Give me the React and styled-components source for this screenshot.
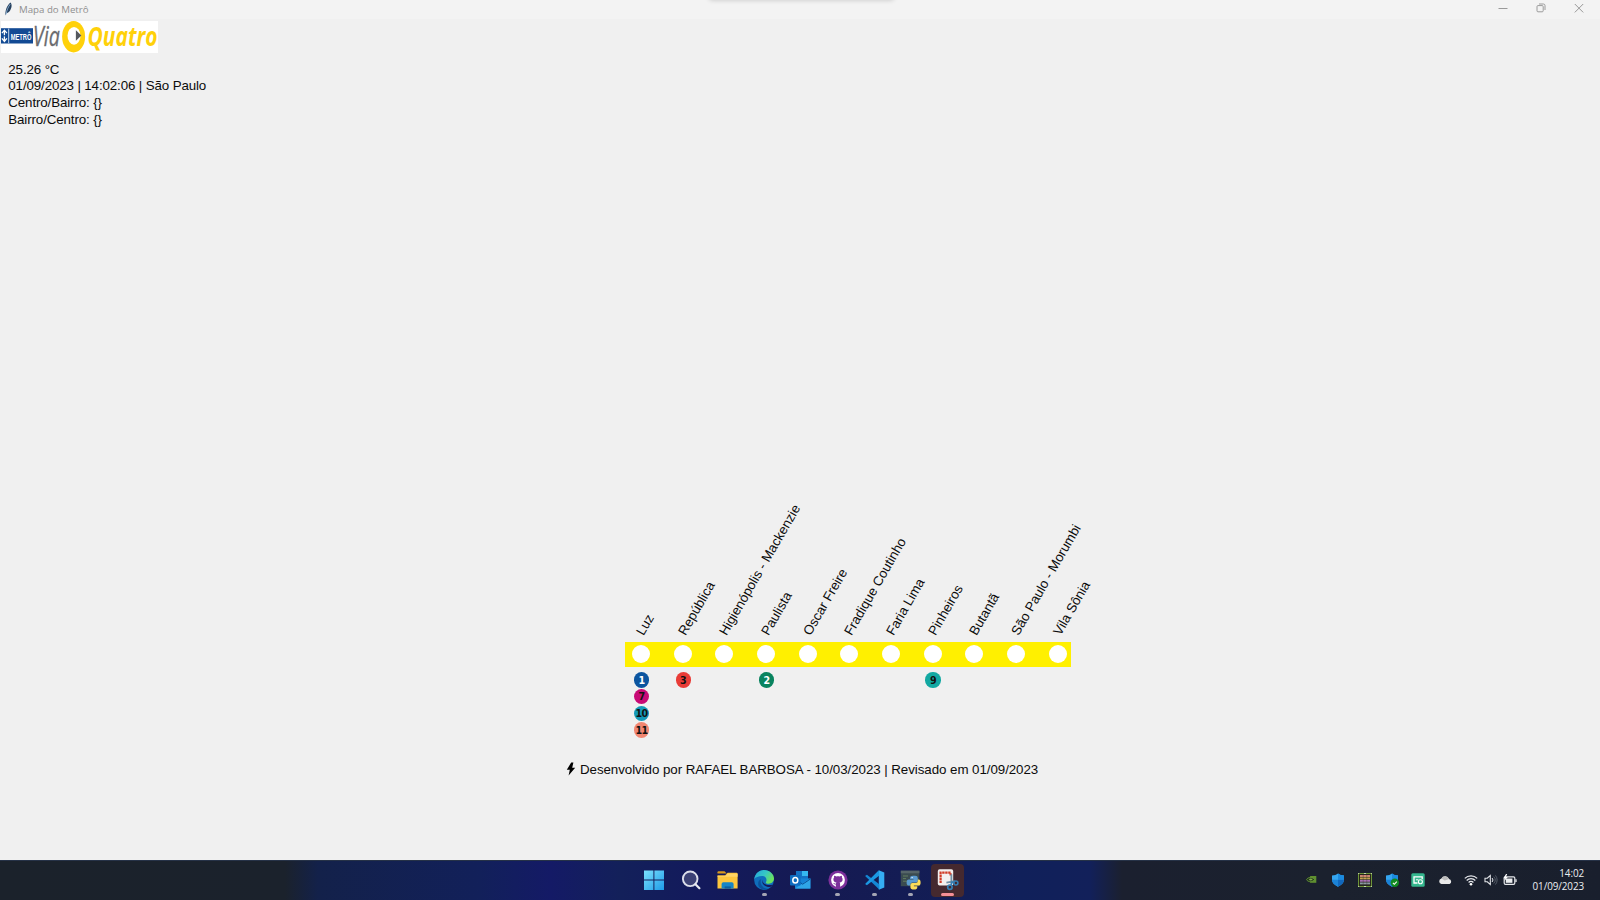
import React from "react";
import styled, { createGlobalStyle } from "styled-components";

const Global = createGlobalStyle`
  * { box-sizing: border-box; }
  body { margin: 0; background: #f0f0f0; overflow: hidden; }
  svg { display: block; flex: none; }
`;

const Screen = styled.div`
  width: 1600px;
  height: 900px;
  display: flex;
  flex-direction: column;
  background: #f0f0f0;
  color: #0c0c0c;
  font-family: "Liberation Sans", Arial, sans-serif;
  font-size: 13.33px;
`;

const TitleBar = styled.header`
  position: relative;
  height: 19px;
  flex: none;
  display: flex;
  align-items: center;
  padding: 0 15px 2px 3px;
  background: #f3f3f3;
`;

const TopShade = styled.div`
  position: absolute;
  left: 709px;
  top: -7px;
  width: 185px;
  height: 6px;
  border-radius: 4px;
  box-shadow: 0 1px 5px rgba(0, 0, 0, 0.2);
`;

const WindowTitle = styled.span`
  flex: 1;
  margin-left: 5px;
  padding-top: 3px;
  font-family: "Open Sans", sans-serif;
  font-size: 9.7px;
  line-height: 14px;
  color: #8f8f8f;
`;

const WindowControls = styled.div`
  display: flex;
  gap: 26px;
  margin-top: -1px;
`;

const Client = styled.main`
  flex: 1;
  display: flex;
  flex-direction: column;
`;

const LogoStrip = styled.div`
  margin: 2px 0 0 1px;
  width: 157px;
  height: 31.5px;
  background: #fff;
`;

const Info = styled.div`
  height: 589.2px;
  padding: 9.2px 0 0 8.3px;
  line-height: 16.67px;
  letter-spacing: -0.12px;
`;

const Line = styled.section`
  margin-left: 625px;
  width: 446px;
  height: 127px;
`;

const Track = styled.div`
  display: flex;
  height: 25px;
  padding-left: 7px;
  background: #fff000;
`;

const Station = styled.div`
  flex: none;
  width: 41.67px;
  display: flex;
  flex-direction: column;
`;

const StationName = styled.div`
  height: 0;
  white-space: nowrap;

  span {
    display: block;
    width: max-content;
    line-height: 16px;
    transform-origin: 0 12.5px;
    transform: translate(12px, -18px) rotate(-60deg);
  }
`;

const Stop = styled.div`
  width: 18px;
  height: 18px;
  flex: none;
  margin-top: 3px;
  border-radius: 50%;
  background: #fff;
`;

const Transfers = styled.div`
  display: flex;
  flex-direction: column;
  gap: 1.27px;
  margin: 9.7px 0 0 1.9px;
`;

const Transfer = styled.span`
  width: 15.4px;
  height: 15.4px;
  flex: none;
  display: flex;
  align-items: center;
  justify-content: center;
  border-radius: 50%;
  background: ${(p) => p.$bg};
  color: ${(p) => p.$fg || "#111"};
  font: bold 10.6px/15px "DejaVu Sans Condensed", "DejaVu Sans", sans-serif;
  font-stretch: condensed;
  letter-spacing: -0.7px;
  padding-right: 0.4px;
`;

const Credits = styled.footer`
  display: flex;
  align-items: center;
  margin: -8.5px 0 0 566px;
  height: 18px;
  letter-spacing: -0.06px;
  white-space: nowrap;

  svg { margin-right: 4px; }
`;

const Taskbar = styled.nav`
  height: 40px;
  flex: none;
  display: grid;
  grid-template-columns: 635.6px 1fr auto;
  border-top: 1px solid #263247;
  background: linear-gradient(90deg, #1b222b 0, #1b222c 285px, #13214a 318px,
    #12205a 480px, #141a66 550px, #13205a 620px, #131a5c 700px, #151a52 820px, #131d55 940px,
    #10205a 1020px, #12205a 1090px, #1b202f 1122px, #1b212e 1330px, #191f2d 1600px);
`;

const Apps = styled.div`
  grid-column: 2;
  display: flex;
`;

const AppButton = styled.div`
  width: 33px;
  height: 33px;
  margin: 3px 1.86px 0;
  flex: none;
  display: flex;
  flex-direction: column;
  align-items: center;
  border-radius: 4px;
  background: ${(p) => (p.$active ? "#45292f" : "transparent")};

  svg { margin-top: 6px; }
`;

const Indicator = styled.i`
  width: ${(p) => (p.$active ? 13 : 5)}px;
  height: 2.6px;
  margin-top: ${(p) => (p.$active ? 2.4 : 3.4)}px;
  border-radius: 2px;
  background: ${(p) => (p.$active ? "#f58f96" : "#a5a6b4")};
`;

const Tray = styled.div`
  display: flex;
  align-items: center;
  padding: 0 16px 2px 0;
`;

const TrayItem = styled.div`
  width: ${(p) => p.$w}px;
  display: flex;
  justify-content: center;
`;

const Clock = styled.div`
  width: 63px;
  text-align: right;
  color: #eceef2;
  font: 9.9px/13px "Open Sans", sans-serif;
  letter-spacing: -0.1px;
`;

const Feather = () => (
  <svg width="11" height="14" viewBox="0 0 11 14">
    <path d="M2.4 13.6 C2.2 9.5 3.2 4 7.6 .6 C9.4 3 8.6 6.5 6.8 9 C5.6 10.4 4.4 11 3.4 11z" fill="#25405e" />
    <path d="M3 12.4 C3.8 8 5.2 5 7.2 2.2" stroke="#8cb2d6" strokeWidth=".9" fill="none" />
  </svg>
);

const Logo = () => (
  <svg width="157" height="31.5" viewBox="0 0 157 31.5" style={{ overflow: "visible" }}>
    <rect x="0" y="7.2" width="32" height="15.3" fill="#124a94" />
    <path d="M7.7 7.6v14.5" stroke="#dfe9f5" strokeWidth=".9" />
    <path d="M.9 12.2 L3.4 9.2 5.9 12.2 M.9 17.4 L3.4 20.4 5.9 17.4 M3.4 9.6v10.4" stroke="#fff" strokeWidth="1.3" fill="none" />
    <path d="M.4 14.8h6" stroke="#124a94" strokeWidth="1.2" />
    <text x="9.8" y="18.6" textLength="20.6" lengthAdjust="spacingAndGlyphs" fontFamily="Liberation Sans" fontWeight="bold" fontSize="9.6" fill="#fff">METRÔ</text>
    <text x="32" y="24.8" textLength="26.8" lengthAdjust="spacingAndGlyphs" fontFamily="Open Sans" fontStyle="italic" fontSize="26.5" fill="#6b6c6f" stroke="#6b6c6f" strokeWidth=".3">Via</text>
    <ellipse cx="72.6" cy="15.7" rx="11.5" ry="15.7" fill="#ffd10a" />
    <ellipse cx="73" cy="14.8" rx="6.5" ry="8.9" fill="#fff" />
    <path d="M74.9 9.2 L80.4 14.5 74.9 19.8z" fill="#55585c" />
    <text x="86.6" y="24.8" textLength="70" lengthAdjust="spacingAndGlyphs" fontFamily="Open Sans" fontStyle="italic" fontWeight="bold" fontSize="26" fill="#ffd10a">Quatro</text>
  </svg>
);

const Bolt = () => (
  <svg width="10" height="14" viewBox="0 0 10 14">
    <path d="M5.2 .5 L.8 7.8 H3.8 L2.6 13.6 L9.2 5.7 H6.2 L7.4 .5z" fill="#000" />
  </svg>
);

const Start = () => (
  <svg width="20" height="20" viewBox="0 0 20 20">
    <defs>
      <linearGradient id="win" x1="0" y1="0" x2="1" y2="1">
        <stop offset="0" stopColor="#7be0fb" /><stop offset="1" stopColor="#1e9be8" />
      </linearGradient>
    </defs>
    <path d="M0 .5h9.4v9H0zM10.4 .5H20v9H10.4zM0 10.5h9.4v9.5H0zM10.4 10.5H20V20H10.4z" fill="url(#win)" />
  </svg>
);

const Search = () => (
  <svg width="20" height="20" viewBox="0 0 20 20">
    <circle cx="9.2" cy="8.8" r="7.3" fill="#3b4175" stroke="#dcdfea" strokeWidth="1.9" />
    <path d="M14.4 14.2 L18.4 18.2" stroke="#e8eaf1" strokeWidth="2.2" strokeLinecap="round" />
  </svg>
);

const Folder = () => (
  <svg width="21" height="20" viewBox="0 0 21 20">
    <path d="M.5 2.2q0-1 1-1h6l2.2 2.4h-9.2z" fill="#d99a1d" />
    <path d="M.5 5.2h7.7l2.4-2.4h9q1 0 1 1v14.8H.5z" fill="#fcc63d" />
    <path d="M.5 6h8l2.2-2.2h9.9v3H.5z" fill="#ffd565" />
    <path d="M4.6 18.6v-4.5q0-1.8 1.8-1.8h8.4q1.8 0 1.8 1.8v4.5z" fill="#1685c5" />
    <path d="M7.6 18.6v-2.2h6.2v2.2z" fill="#0d5f9e" />
  </svg>
);

const Edge = () => (
  <svg width="20" height="20" viewBox="0 0 20 20">
    <defs>
      <linearGradient id="edgeTop" x1="0" y1="0" x2="1" y2=".5">
        <stop offset="0" stopColor="#23a5df" /><stop offset=".55" stopColor="#36c7c5" /><stop offset="1" stopColor="#6be25c" />
      </linearGradient>
    </defs>
    <circle cx="10" cy="10" r="9.9" fill="#0f6ebc" />
    <path d="M.2 9.2 C1 3.8 5 .1 10 .1 C15.8 .1 20 4.3 20 8.6 C20 12 17.4 13.7 14.6 13.7 C12.4 13.7 11.4 12.8 12 11.9 C13.3 10 12.2 6.1 8.2 6.1 C4.5 6.1 1.3 7.4 .2 9.2z" fill="url(#edgeTop)" />
    <path d="M7.2 9.3 C5.1 14 8.9 18.8 14.3 18.7 C9.6 21.4 4.7 18.3 4.2 14.5 C3.9 11.6 5.2 9.8 7.2 9.3z" fill="#0b529c" />
    <path d="M8.8 9.6 C7.6 12.6 11.4 15.9 18.5 14.7 C17.9 15.8 17.2 16.5 16.2 17.1 C10.6 17.5 6.8 13 8.8 9.6z" fill="#151a5a" />
  </svg>
);

const Outlook = () => (
  <svg width="21" height="20" viewBox="0 0 21 20">
    <path d="M6 1h12v9H6z" fill="#1373c6" />
    <path d="M12 1h6v5h-6z" fill="#35b8f1" />
    <path d="M5 8.4h15.4V18.6H5z" fill="#1683d6" />
    <path d="M5 18.6 L20.4 8.4V18.6z" fill="#2fa5e6" />
    <path d="M5 9 L12.7 14.2 20.4 9" stroke="#0b5096" strokeWidth="1" fill="none" />
    <rect x="0" y="5" width="10.6" height="10.4" rx="1" fill="#0f6cc0" />
    <ellipse cx="5.3" cy="10.2" rx="2.5" ry="2.8" fill="none" stroke="#fff" strokeWidth="1.5" />
  </svg>
);

const GitHub = () => (
  <svg width="20" height="20" viewBox="0 0 20 20">
    <circle cx="10" cy="10" r="9.6" fill="#7c309b" />
    <circle cx="10" cy="10" r="6.9" fill="#fff" />
    <path d="M7.9 17v-2.5c-1.7.3-2-.8-2.7-1.4 1.2-.1 1.4 1 2.7.6.1-.6.3-.8.6-1.1-2.1-.3-3.1-1.3-3.1-3.1 0-.8.2-1.4.7-1.9-.2-.7-.1-1.4.2-1.9.8 0 1.4.4 1.9.8 1.2-.3 2.4-.3 3.6 0 .5-.4 1.1-.8 1.9-.8.3.5.4 1.2.2 1.9.5.5.7 1.1.7 1.9 0 1.8-1 2.8-3.1 3.1.4.3.6.8.6 1.6v2.8z" fill="#7c309b" />
  </svg>
);

const Code = () => (
  <svg width="21" height="20" viewBox="0 0 21 20">
    <path d="M14.8 .3 L20.3 2.5V17.5L14.8 19.7z" fill="#35aef3" />
    <path d="M1.1 6.1 L2.9 4.8 L15.3 14.3V19.4z" fill="#1487d4" />
    <path d="M1.1 13.9 L14.8 .3 15.3 5.6 L2.9 15.2z" fill="#1a98e3" />
  </svg>
);

const PyTerminal = () => (
  <svg width="21" height="20" viewBox="0 0 21 20">
    <rect x=".8" y=".7" width="18.6" height="15.5" fill="#3a4b50" />
    <rect x=".8" y=".7" width="18.6" height="2.6" fill="#566569" />
    <path d="M3 6h5M3 8.6h3M3 11.2h4" stroke="#6d8a62" strokeWidth=".8" />
    <path d="M13 5.8h2.3q2.5 0 2.5 2.2v2.6q0 2-2 2h-3.4q-2 0-2 2v1H8.8q-2.2 0-2.2-2.8 0-3.2 2.2-3.2h4.7v-.7h-3.4V8q0-2.2 2.9-2.2z" fill="#5b9bd0" />
    <path d="M17.8 9.6h1q1.8 0 1.8 3.2 0 2.8-2 2.8h-4.7v.7h3.4v1q0 2.3-3.3 2.3-3.6 0-3.6-2.3v-2.2q0-2 2-2h3.4q2 0 2-2z" fill="#fcdc58" />
    <circle cx="12.1" cy="7.6" r=".7" fill="#fff" />
  </svg>
);

const Snip = () => (
  <svg width="21" height="21" viewBox="0 0 21 21" style={{ overflow: "visible" }}>
    <rect x=".8" y="-.7" width="15.4" height="16.2" rx="1.8" fill="#f2efee" />
    <path d="M3.6 13V2.6H13.6v3.6" stroke="#d03a24" strokeWidth="2.2" strokeDasharray="2.4 .6" fill="none" />
    <path d="M14.4 4.2v9.3M9.4 12.6l8.4-1.4" stroke="#6f8fa5" strokeWidth="1.8" />
    <circle cx="12.9" cy="17.2" r="2.2" fill="none" stroke="#347fb5" strokeWidth="1.7" />
    <circle cx="18.9" cy="13" r="2" fill="none" stroke="#347fb5" strokeWidth="1.6" />
    <path d="M14 15.3l.7-2.7M17 12.4l-3-.4" stroke="#347fb5" strokeWidth="1.6" />
  </svg>
);

const Nvidia = () => (
  <svg width="11" height="9" viewBox="0 0 11 9">
    <rect x="4.1" y="1" width="6.2" height="6.8" fill="#5f9030" />
    <path d="M.4 4.6C2.3 1.8 6 1.8 8.6 4.5 6 7.4 2.3 7.4 .4 4.6z" fill="#24391c" stroke="#6d9f38" strokeWidth=".8" />
    <path d="M2.8 4.5C4 3.1 5.5 3.2 6.7 4.5 5.4 5.9 3.9 5.8 2.8 4.5z" fill="#83b04a" />
  </svg>
);

const Shield = ({ ok }) => (
  <svg width="14" height="14" viewBox="0 0 14 14">
    <path d="M7 .5C8.5 1.8 10.5 2.4 13 2.5V6.6C13 9.8 10.6 12.2 7 13.7 3.4 12.2 1 9.8 1 6.6V2.5C3.5 2.4 5.5 1.8 7 .5z" fill="#35a6f0" />
    <path d="M1 6.8h6v6.9C3.4 12.2 1 9.8 1 6.8z" fill="#1b82d6" />
    <path d="M7 .5C8.5 1.8 10.5 2.4 13 2.5V6.8H7z" fill="#1b8be0" />
    <path d="M7 6.8h6C13 9.8 10.6 12.2 7 13.7z" fill="#1167bd" />
    {ok && (
      <>
        <circle cx="9.8" cy="9.8" r="4.2" fill="#118a20" />
        <path d="M7.9 9.9l1.4 1.4 2.5-2.7" stroke="#fff" strokeWidth="1.1" fill="none" />
      </>
    )}
  </svg>
);

const Meter = () => (
  <svg width="14" height="14" viewBox="0 0 14 14">
    <rect x=".5" y=".5" width="13" height="13" fill="#26251c" stroke="#6d9437" />
    <path d="M2 3h10" stroke="#d78a76" strokeWidth="1.9" />
    <path d="M2 5.4h10" stroke="#c3a34e" strokeWidth="1.9" />
    <path d="M2 7.8h10" stroke="#a86fb5" strokeWidth="1.9" />
    <path d="M2 10.4h10" stroke="#8d9aa4" strokeWidth="1.9" />
    <path d="M5.2 1.5v11M8.8 1.5v11" stroke="#37362a" strokeWidth=".4" />
    <path d="M0 1V0h1M13 0H14v1M0 13V14h1M13 14H14v-1M6 .4h2M6 13.6h2" stroke="#d8dfcf" strokeWidth=".9" fill="none" />
  </svg>
);

const Cast = () => (
  <svg width="14" height="14" viewBox="0 0 14 14">
    <rect x=".3" y=".3" width="13.4" height="13.4" rx="1.5" fill="#35b78e" />
    <path d="M6.5 10H3V3.8h8.2v2.4" stroke="#fff" strokeWidth="1.3" fill="none" />
    <circle cx="9.4" cy="8.8" r="2" fill="none" stroke="#fff" strokeWidth="1.1" />
    <path d="M5 6.8h2.4" stroke="#fff" strokeWidth="1" />
  </svg>
);

const Cloud = () => (
  <svg width="15" height="10" viewBox="0 0 15 10">
    <path d="M3.3 9A2.9 2.9 0 0 1 3.4 3.4 4.3 4.3 0 0 1 11 3.9 2.7 2.7 0 0 1 11.6 9z" fill="#e9e9e9" />
    <path d="M3.4 3.4A4.3 4.3 0 0 1 11 3.9L6.8 5.6z" fill="#bcbcbc" />
  </svg>
);

const Wifi = () => (
  <svg width="14" height="12" viewBox="0 0 14 12">
    <path d="M.8 4.4a8.6 8.6 0 0 1 12.4 0M2.7 6.5a5.9 5.9 0 0 1 8.6 0M4.6 8.5a3.3 3.3 0 0 1 4.8 0" stroke="#e4e6ea" strokeWidth="1.25" fill="none" />
    <circle cx="7" cy="10.2" r="1.3" fill="#fff" />
  </svg>
);

const Volume = () => (
  <svg width="14" height="12" viewBox="0 0 14 12">
    <path d="M1 4.2h2.3L6.3 1.4v9.2L3.3 7.8H1z" stroke="#e4e6ea" strokeWidth="1.1" fill="none" />
    <path d="M8.1 4a3 3 0 0 1 0 4" stroke="#e4e6ea" strokeWidth="1" fill="none" />
    <path d="M9.7 2.6a5 5 0 0 1 0 6.8M11.4 1.4a7 7 0 0 1 0 9.2" stroke="#59606c" strokeWidth=".9" fill="none" />
  </svg>
);

const Battery = () => (
  <svg width="14" height="12" viewBox="0 0 14 12">
    <rect x="1.2" y="2.8" width="10.6" height="7.6" rx="1.3" fill="none" stroke="#e6e8ec" strokeWidth="1.2" />
    <rect x="2.8" y="4.5" width="6.6" height="4.3" fill="#eceef0" />
    <path d="M13 5.3v2.6" stroke="#e6e8ec" strokeWidth="1.3" />
    <path d="M3 0L.4 4.2h1.8L1.4 7 4.8 2.9H2.9L4.2 0z" fill="#fff" />
  </svg>
);

const stations = [
  {
    name: "Luz",
    lines: [
      { n: 1, bg: "#0c55a0", fg: "#fff" },
      { n: 7, bg: "#c80a76" },
      { n: 10, bg: "#1499b8" },
      { n: 11, bg: "#f18671" },
    ],
  },
  { name: "República", lines: [{ n: 3, bg: "#e93c37" }] },
  { name: "Higienópolis - Mackenzie" },
  { name: "Paulista", lines: [{ n: 2, bg: "#09835f", fg: "#fff" }] },
  { name: "Oscar Freire" },
  { name: "Fradique Coutinho" },
  { name: "Faria Lima" },
  { name: "Pinheiros", lines: [{ n: 9, bg: "#12a8a2" }] },
  { name: "Butantã" },
  { name: "São Paulo - Morumbi" },
  { name: "Vila Sônia" },
];

const apps = [
  { icon: Start },
  { icon: Search },
  { icon: Folder },
  { icon: Edge, running: true },
  { icon: Outlook },
  { icon: GitHub, running: true },
  { icon: Code, running: true },
  { icon: PyTerminal, running: true },
  { icon: Snip, running: true, active: true },
];

export default function App() {
  return (
    <Screen>
      <Global />
      <TitleBar>
        <TopShade />
        <Feather />
        <WindowTitle>Mapa do Metrô</WindowTitle>
        <WindowControls>
          <svg width="12" height="12" viewBox="0 0 12 12"><path d="M1.5 6.5h9" stroke="#9a9a9a" /></svg>
          <svg width="12" height="12" viewBox="0 0 12 12" fill="none" stroke="#9a9a9a">
            <rect x="2" y="3.6" width="6.2" height="6.2" rx="1" />
            <path d="M4 2h4.4Q10 2 10 3.6V8" />
          </svg>
          <svg width="12" height="12" viewBox="0 0 12 12"><path d="M1.8 2l8.4 8.4M10.2 2l-8.4 8.4" stroke="#8d8d8d" strokeWidth=".9" /></svg>
        </WindowControls>
      </TitleBar>

      <Client>
        <LogoStrip><Logo /></LogoStrip>
        <Info>
          <div>25.26 °C</div>
          <div>01/09/2023 | 14:02:06 | São Paulo</div>
          <div>Centro/Bairro: {"{}"}</div>
          <div>Bairro/Centro: {"{}"}</div>
        </Info>
        <Line>
          <Track>
            {stations.map((s) => (
              <Station key={s.name}>
                <StationName><span>{s.name}</span></StationName>
                <Stop />
                {s.lines && (
                  <Transfers>
                    {s.lines.map((l) => (
                      <Transfer key={l.n} $bg={l.bg} $fg={l.fg}>{l.n}</Transfer>
                    ))}
                  </Transfers>
                )}
              </Station>
            ))}
          </Track>
        </Line>
        <Credits>
          <Bolt />
          <span>Desenvolvido por RAFAEL BARBOSA - 10/03/2023 | Revisado em 01/09/2023</span>
        </Credits>
      </Client>

      <Taskbar>
        <Apps>
          {apps.map(({ icon: Icon, running, active }, i) => (
            <AppButton key={i} $active={active}>
              <Icon />
              {running && <Indicator $active={active} />}
            </AppButton>
          ))}
        </Apps>
        <Tray>
          <TrayItem $w={26.5}><Nvidia /></TrayItem>
          <TrayItem $w={26.5}><Shield /></TrayItem>
          <TrayItem $w={27}><Meter /></TrayItem>
          <TrayItem $w={27}><Shield ok /></TrayItem>
          <TrayItem $w={26}><Cast /></TrayItem>
          <TrayItem $w={28}><Cloud /></TrayItem>
          <TrayItem $w={23}><Wifi /></TrayItem>
          <TrayItem $w={17}><Volume /></TrayItem>
          <TrayItem $w={22}><Battery /></TrayItem>
          <Clock>
            <div>14:02</div>
            <div>01/09/2023</div>
          </Clock>
        </Tray>
      </Taskbar>
    </Screen>
  );
}
